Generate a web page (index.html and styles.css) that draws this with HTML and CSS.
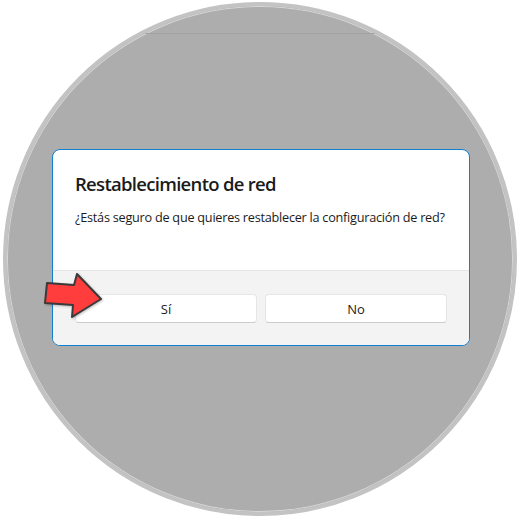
FILE: index.html
```html
<!DOCTYPE html>
<html lang="es">
<head>
  <meta charset="UTF-8">
  <title>Restablecimiento de red</title>
  <link rel="stylesheet" href="styles.css">
</head>
<body>
  <!-- Circle frame -->
  <div class="circle">
    <div class="window-edge"></div>

    <!-- Dialog -->
    <div class="dialog">
      <div class="dialog-body">
        <h1 class="dialog-title">Restablecimiento de red</h1>
        <p class="dialog-text">¿Estás seguro de que quieres restablecer la configuración de red?</p>
      </div>
      <div class="dialog-footer">
        <button class="btn">Sí</button>
        <button class="btn">No</button>
      </div>
    </div>
  </div>

  <!-- Red pointer arrow -->
  <svg class="arrow" width="66" height="54" viewBox="40 268 66 54">
    <polygon points="47,283 74,285 77,274 101,299 72,317 73,305 45,303"
      fill="#ff3d3d" stroke="#3a3a3a" stroke-width="2" stroke-linejoin="round"/>
  </svg>
</body>
</html>
```

FILE: styles.css
```css
* {
  margin: 0;
  padding: 0;
  box-sizing: border-box;
}

body {
  width: 520px;
  height: 520px;
  background-color: #ffffff;
  font-family: 'Open Sans', 'Noto Sans', sans-serif;
  color: #1b1b1b;
  position: relative;
  overflow: hidden;
  padding: 2px 0 0 3px;
}

/* Grey circle */
.circle {
  width: 514px;
  height: 514px;
  border-radius: 50%;
  background-color: #adadad;
  border: 4px solid #c3c3c3;
  box-shadow: inset 0 0 0 1px #d6d6d6;
  overflow: hidden;
  display: flex;
  flex-direction: column;
}

.window-edge {
  height: 1px;
  margin-top: 27px;
  background-color: #a3a3a3;
}

/* Dialog */
.dialog {
  width: 418px;
  height: 197px;
  margin-top: 115px;
  margin-left: 45px;
  background-color: #ffffff;
  border: 1px solid #0f7fd2;
  border-radius: 8px;
  overflow: hidden;
  display: flex;
  flex-direction: column;
}

.dialog-body {
  flex: 1;
  padding: 20px 22px 0;
}

.dialog-title {
  font-size: 18.5px;
  font-weight: 600;
  line-height: 28px;
  letter-spacing: -0.7px;
  color: #1b1b1b;
}

.dialog-text {
  font-size: 12.7px;
  line-height: 20px;
  letter-spacing: -0.25px;
  white-space: nowrap;
  margin-top: 9px;
  color: #1b1b1b;
}

.dialog-footer {
  height: 75px;
  background-color: #f3f3f3;
  border-top: 1px solid #e5e5e5;
  display: flex;
  gap: 8px;
  padding: 23px 22px 0;
}

.btn {
  flex: 1;
  height: 29px;
  background-color: #ffffff;
  border: 1px solid #e6e6e6;
  border-bottom-color: #cccccc;
  border-radius: 4px;
  font-family: 'Open Sans', 'Noto Sans', sans-serif;
  font-size: 13px;
  color: #1b1b1b;
}

/* Arrow overlay */
.arrow {
  position: absolute;
  left: 40px;
  top: 268px;
  filter: drop-shadow(1px 1px 1px rgba(0, 0, 0, 0.25));
}
```
